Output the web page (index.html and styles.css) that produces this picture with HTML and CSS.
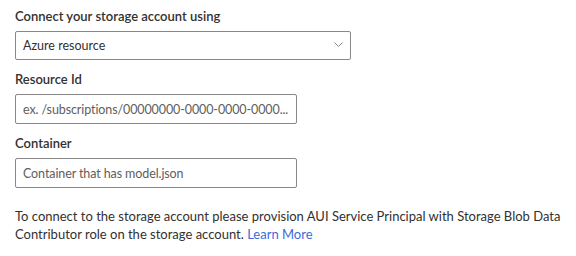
FILE: index.html
```html
<!DOCTYPE html>
<html lang="en">
<head>
  <meta charset="UTF-8">
  <title>Connect storage account</title>
  <link rel="stylesheet" href="styles.css">
</head>
<body>
  <div class="panel">
    <div class="field">
      <label class="label">Connect your storage account using</label>
      <div class="dropdown">
        <span class="dropdown-text">Azure resource</span>
        <svg class="chevron" width="9" height="5" viewBox="0 0 9 5">
          <path d="M0.5 0.5 L4.5 4.5 L8.5 0.5" fill="none" stroke="#8a8886" stroke-width="1"/>
        </svg>
      </div>
    </div>

    <div class="field">
      <label class="label">Resource Id</label>
      <input class="textbox" type="text" placeholder="ex. /subscriptions/00000000-0000-0000-0000...">
    </div>

    <div class="field">
      <label class="label">Container</label>
      <input class="textbox" type="text" placeholder="Container that has model.json">
    </div>

    <p class="note">
      To connect to the storage account please provision AUI Service Principal with Storage Blob Data<br>
      Contributor role on the storage account. <a href="#" class="link">Learn More</a>
    </p>
  </div>
</body>
</html>
```

FILE: styles.css
```css
body {
  margin: 0;
  background: #fff;
  font-family: Lato, "Open Sans", sans-serif;
  color: #323130;
}
.panel {
  padding: 7px 6px 7px 15px;
}
.field {
  margin-bottom: 10px;
}
.label {
  display: block;
  font-size: 13px;
  font-weight: 600;
  line-height: 18px;
  margin-bottom: 6px;
}
.dropdown {
  width: 336px;
  height: 29px;
  box-sizing: border-box;
  border: 1px solid #8a8886;
  border-radius: 2px;
  display: flex;
  align-items: center;
  justify-content: space-between;
  padding: 0 7px 0 7px;
  font-size: 12.5px;
}
.chevron {
  margin-bottom: 2px;
}
.textbox {
  display: block;
  width: 282px;
  height: 30px;
  box-sizing: border-box;
  border: 1px solid #8a8886;
  border-radius: 2px;
  padding: 0 7px;
  font-family: inherit;
  font-size: 12.5px;
  letter-spacing: -0.1px;
  color: #323130;
  outline: none;
  text-overflow: ellipsis;
}
.textbox::placeholder {
  color: #605e5c;
}
.note {
  margin: 19px 0 0;
  font-size: 13px;
  line-height: 18px;
}
.link {
  color: #3f6ad8;
  text-decoration: none;
}
```
